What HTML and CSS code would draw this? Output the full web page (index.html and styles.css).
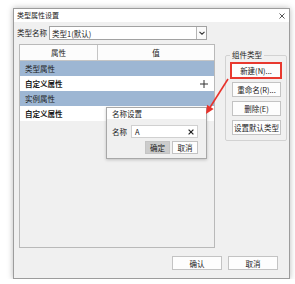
FILE: index.html
```html
<!DOCTYPE html>
<html lang="zh-CN">
<head>
    <meta charset="UTF-8">
    <title>类型属性设置</title>
    <link rel="stylesheet" href="styles.css">
</head>
<body>

<div class="window">
    <div class="titlebar">
        <span class="title">类型属性设置</span>
        <svg class="close" width="6" height="6" viewBox="0 0 6 6"><path d="M0.5 0.5L5.5 5.5M5.5 0.5L0.5 5.5" stroke="#555" stroke-width="1"/></svg>
    </div>

    <div class="body">
        <div class="name-row">
            <span class="label">类型名称</span>
            <div class="combo">
                <span class="combo-text">类型1(默认)</span>
                <span class="drop"><svg width="6" height="4" viewBox="0 0 6 4"><path d="M0.5 0.8L3 3.2L5.5 0.8" fill="none" stroke="#333" stroke-width="1.1"/></svg></span>
            </div>
        </div>

        <div class="main">
            <div class="grid">
                <div class="grid-head">
                    <div class="col-name">属性</div>
                    <div class="col-value">值</div>
                </div>
                <div class="row group-row">类型属性</div>
                <div class="row item-row">
                    <span>自定义属性</span>
                    <svg class="plus" width="8" height="8" viewBox="0 0 8 8"><path d="M4 0V8M0 4H8" stroke="#333" stroke-width="1"/></svg>
                </div>
                <div class="row group-row">实例属性</div>
                <div class="row item-row"><span>自定义属性</span></div>
            </div>

            <fieldset class="types">
                <legend>组件类型</legend>
                <button class="btn btn-active">新建(N)...</button>
                <button class="btn">重命名(R)...</button>
                <button class="btn">删除(E)</button>
                <button class="btn">设置默认类型</button>
            </fieldset>
        </div>

        <div class="footer">
            <button class="btn btn-foot">确认</button>
            <button class="btn btn-foot">取消</button>
        </div>
    </div>

    <div class="popup">
        <div class="popup-title">名称设置</div>
        <div class="popup-body">
            <div class="popup-row">
                <span class="label">名称</span>
                <div class="input">
                    <span>A</span>
                    <svg width="6" height="6" viewBox="0 0 6 6"><path d="M0.6 0.6L5.4 5.4M5.4 0.6L0.6 5.4" stroke="#222" stroke-width="1.2"/></svg>
                </div>
            </div>
            <div class="popup-buttons">
                <button class="btn btn-small btn-pressed">确定</button>
                <button class="btn btn-small">取消</button>
            </div>
        </div>
    </div>

    <svg class="arrow" width="277" height="271" viewBox="0 0 277 271">
        <path d="M215 71L196 101" stroke="#e8322b" stroke-width="1.6"/>
        <path d="M193 106L200.6 100.9L194 96.8Z" fill="#e8322b"/>
    </svg>
</div>

</body>
</html>
```

FILE: styles.css
```css
body {
    margin: 0;
    background: #fff;
    font-family: "Noto Sans CJK SC", "Noto Sans", sans-serif;
    font-size: 7.5px;
    color: #1a1a1a;
}

.window {
    position: relative;
    margin: 8px 0 0 13px;
    width: 277px;
    height: 271px;
    box-sizing: border-box;
    border: 1px solid #9c9c9c;
    background: #f0f0f0;
    box-shadow: 0 0 6px rgba(0, 0, 0, 0.28);
    display: flex;
    flex-direction: column;
}

.titlebar {
    height: 13px;
    flex: none;
    background: #fff;
    display: flex;
    align-items: center;
    justify-content: space-between;
    padding: 0 4px 0 3px;
}

.title {
    font-size: 7px;
    line-height: 13px;
}

.body {
    flex: 1;
    display: flex;
    flex-direction: column;
    padding: 4px 2px 8px 5px;
}

.name-row {
    display: flex;
    align-items: center;
    gap: 2px;
    height: 14px;
    margin-left: -2px;
}

.label {
    line-height: 14px;
}

.combo {
    width: 158px;
    height: 14px;
    box-sizing: border-box;
    border: 1px solid #a2a2a2;
    background: #fff;
    display: flex;
    align-items: center;
    justify-content: space-between;
}

.combo-text {
    padding-left: 2px;
}

.drop {
    width: 10px;
    height: 12px;
    box-sizing: border-box;
    border-left: 1px solid #b5b5b5;
    background: #fafafa;
    display: flex;
    align-items: center;
    justify-content: center;
}

.main {
    display: flex;
    gap: 10px;
    height: 204px;
    margin-top: 4px;
}

.grid {
    width: 196px;
    flex: none;
    box-sizing: border-box;
    border: 1px solid #b9b9b9;
    background: #f0f0f0;
}

.grid-head {
    display: flex;
    height: 15px;
    background: #fcfcfc;
    border-bottom: 1px solid #c5c5c5;
}

.col-name, .col-value {
    display: flex;
    align-items: center;
    justify-content: center;
}

.col-name {
    width: 77px;
    border-right: 1px solid #c5c5c5;
}

.col-value {
    flex: 1;
}

.row {
    height: 15px;
    display: flex;
    align-items: center;
    justify-content: space-between;
    padding: 0 6px 0 5px;
}

.group-row {
    background: #9db6d3;
}

.item-row {
    background: #fff;
    font-weight: bold;
}

.types {
    align-self: flex-start;
    width: 62px;
    box-sizing: border-box;
    margin: 6px 0 0;
    padding: 2px 4px 5px 4px;
    border: 1px solid #d2d2d2;
    border-radius: 2px;
    display: flex;
    flex-direction: column;
    gap: 4px;
}

.types legend {
    padding: 0 2px;
    line-height: 10px;
}

.btn {
    font-family: inherit;
    font-size: 7.5px;
    color: #1a1a1a;
    background: #fdfdfd;
    border: 1px solid #c3c3c3;
    padding: 0;
    width: 49px;
    height: 15px;
    margin-left: 2px;
    cursor: pointer;
}

.btn-active {
    width: 52px;
    height: 17px;
    margin: 0 0 -1px 0;
    border: 2px solid #e8392f;
}

.footer {
    display: flex;
    justify-content: flex-end;
    gap: 6px;
    margin-top: 8px;
    padding-right: 9px;
}

.btn-foot {
    width: 50px;
    height: 14px;
    margin: 0;
}

.popup {
    position: absolute;
    left: 92px;
    top: 98px;
    width: 101px;
    height: 52px;
    box-sizing: border-box;
    border: 1px solid #a8a8a8;
    background: #f0f0f0;
    box-shadow: 0 1px 3px rgba(0, 0, 0, 0.2);
}

.popup-title {
    height: 11px;
    line-height: 11px;
    background: #fff;
    padding-left: 5px;
}

.popup-body {
    padding: 6px 8px 0 5px;
}

.popup-row {
    display: flex;
    align-items: center;
    justify-content: space-between;
    height: 13px;
}

.input {
    width: 67px;
    height: 13px;
    box-sizing: border-box;
    border: 1px solid #d0d0d0;
    background: #fff;
    display: flex;
    align-items: center;
    justify-content: space-between;
    padding: 0 3px 0 3px;
}

.popup-buttons {
    display: flex;
    justify-content: flex-end;
    gap: 2px;
    margin-top: 3px;
}

.btn-small {
    width: 26px;
    height: 13px;
    margin: 0;
}

.btn-pressed {
    width: 25px;
    background: #cccccc;
    border-color: #c4c4c4;
}

.arrow {
    position: absolute;
    left: -1px;
    top: -1px;
    pointer-events: none;
}
```
